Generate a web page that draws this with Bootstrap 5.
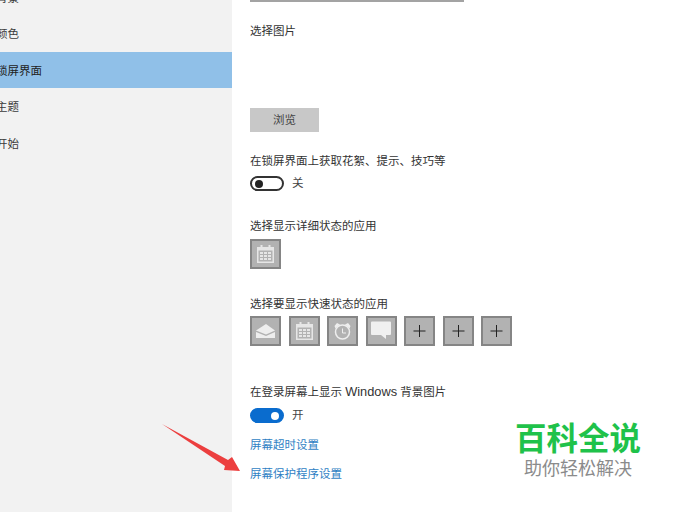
<!DOCTYPE html>
<html lang="zh-CN">
<head>
    <meta charset="UTF-8">
    <meta name="viewport" content="width=device-width, initial-scale=1.0">
    <title>锁屏界面</title>
    <link href="https://cdn.jsdelivr.net/npm/bootstrap@5.3.0/dist/css/bootstrap.min.css" rel="stylesheet">
    <style>
        html, body { height: 512px; overflow: hidden; }
        body { font-family: "Liberation Sans", "Noto Sans CJK SC", sans-serif; font-size: 11.5px; line-height: 18px; color: #333; background: #fff; position: relative; }
        .side-pane { width: 232px; height: 533px; background: #f2f2f2; margin-top: -21px; flex: none; }
        .side-item { height: 36.4px; line-height: 38px; color: #3a3a3a; text-indent: -4px; overflow: hidden; }
        .side-item.current { background: #90c0e8; color: #222; }
        .main-pane { padding-left: 18px; width: 460px; }
        .top-rule { width: 214px; height: 2px; background: #a3a3a3; }
        .set-label { height: 18px; white-space: nowrap; }
        .latin-word { font-size: 12.800px; }
        .browse-btn { width: 69px; height: 24px; background: #c8c8c8; border: 0; border-radius: 0; padding: 0; color: #444; font-size: 11.5px; line-height: 24px; }
        .switch-row { height: 15px; line-height: 15px; color: #444; }
        .switch-box { width: 34px; height: 15px; border: 2px solid #333; border-radius: 8px; position: relative; margin-right: 8px; }
        .switch-box::after { content: ""; position: absolute; top: 1.5px; left: 3px; width: 8px; height: 8px; border-radius: 50%; background: #222; }
        .switch-box.on { background: #0a6cce; border-color: #0a6cce; }
        .switch-box.on::after { left: auto; right: 3px; background: #fff; }
        .tile { width: 31px; height: 30px; background: #b2b2b2; border: 2px solid #858585; flex: none; }
        .tile svg { display: block; width: 27px; height: 26px; }
        .tile-row { gap: 7.5px; }
        .set-link { display: block; height: 18px; color: #2f7fc4; text-decoration: none; white-space: nowrap; }
        .arrow-mark { position: absolute; left: 158px; top: 420px; }
        .wm-box { position: absolute; left: 515px; top: 416px; width: 130px; }
        .wm-title { font-family: "Noto Sans CJK SC", sans-serif; font-size: 31.500px; line-height: 40px; font-weight: 700; color: #1fc24a; white-space: nowrap; }
        .wm-sub { font-family: "Noto Sans CJK SC", sans-serif; font-size: 18px; line-height: 22px; color: #8b8b8b; margin-left: 9px; white-space: nowrap; }
        .gap-a { margin-top: 20px; }
        .gap-b { margin-top: 68px; }
        .gap-c { margin-top: 20px; }
        .gap-d { margin-top: 6px; }
        .gap-e { margin-top: 26px; }
        .gap-f { margin-top: 26px; }
        .gap-g { margin-top: 37px; }
        .gap-h { margin-top: 4px; }
        .gap-h2 { margin-top: 3px; }
        .gap-i { margin-top: 13px; }
        .gap-j { margin-top: 11px; }
        .gap-k { margin-top: 7px; }
    </style>
</head>
<body>
    <div class="d-flex">
        <div class="side-pane">
            <div class="side-item">背景</div>
            <div class="side-item">颜色</div>
            <div class="side-item current">锁屏界面</div>
            <div class="side-item">主题</div>
            <div class="side-item">开始</div>
        </div>
        <div class="main-pane">
            <div class="top-rule"></div>
            <div class="set-label gap-a">选择图片</div>
            <button type="button" class="btn browse-btn d-block gap-b">浏览</button>
            <div class="set-label gap-c">在锁屏界面上获取花絮、提示、技巧等</div>
            <div class="d-flex align-items-center switch-row gap-d"><span class="switch-box"></span>关</div>
            <div class="set-label gap-e">选择显示详细状态的应用</div>
            <div class="d-flex tile-row gap-h">
                <div class="tile">
                    <svg viewBox="0 0 27 26"><path fill="#e6e6e6" d="M5 6h3.500V4h2v2h6V4h2v2H22v16H5z"/><path fill="#b2b2b2" d="M6.500 9.500h14v11h-14z"/><path fill="#e6e6e6" d="M8 11h3v2H8zM12 11h3v2h-3zM16 11h3v2h-3zM8 14h3v2H8zM12 14h3v2h-3zM16 14h3v2h-3zM8 17h3v2H8zM12 17h3v2h-3zM16 17h3v2h-3z"/></svg>
                </div>
            </div>
            <div class="set-label gap-f">选择要显示快速状态的应用</div>
            <div class="d-flex tile-row gap-h2">
                <div class="tile">
                    <svg viewBox="0 0 27 26"><path fill="#eee" d="M4 12.500L14 6l9 6.500V20H4z"/><path fill="#b2b2b2" d="M4 12.500l10 4 9-4v1.500l-9 4-10-4z"/></svg>
                </div>
                <div class="tile">
                    <svg viewBox="0 0 27 26"><path fill="#e6e6e6" d="M5 6h3.500V4h2v2h6V4h2v2H22v16H5z"/><path fill="#b2b2b2" d="M6.500 9.500h14v11h-14z"/><path fill="#e6e6e6" d="M8 11h3v2H8zM12 11h3v2h-3zM16 11h3v2h-3zM8 14h3v2H8zM12 14h3v2h-3zM16 14h3v2h-3zM8 17h3v2H8zM12 17h3v2h-3zM16 17h3v2h-3z"/></svg>
                </div>
                <div class="tile">
                    <svg viewBox="0 0 27 26"><circle cx="13.500" cy="14" r="7" fill="none" stroke="#eee" stroke-width="1.500"/><path fill="none" stroke="#eee" d="M13.500 10.500V15h3.500"/><path fill="#eee" d="M5.500 8L8 5l3 1.500L6.500 10.500zM21.500 8L19 5l-3 1.500 4.500 4z"/></svg>
                </div>
                <div class="tile">
                    <svg viewBox="0 0 27 26"><path fill="#f0f0f0" d="M4 3.500h18a1 1 0 0 1 1 1V16a1 1 0 0 1-1 1h-4v4l-5-4H4a1 1 0 0 1-1-1V4.500a1 1 0 0 1 1-1z"/></svg>
                </div>
                <div class="tile">
                    <svg viewBox="0 0 27 26"><path stroke="#222" d="M13.500 7v12M7.500 13h12"/></svg>
                </div>
                <div class="tile">
                    <svg viewBox="0 0 27 26"><path stroke="#222" d="M13.500 7v12M7.500 13h12"/></svg>
                </div>
                <div class="tile">
                    <svg viewBox="0 0 27 26"><path stroke="#222" d="M13.500 7v12M7.500 13h12"/></svg>
                </div>
            </div>
            <div class="set-label gap-g">在登录屏幕上显示 <span class="latin-word">Windows</span> 背景图片</div>
            <div class="d-flex align-items-center switch-row gap-k"><span class="switch-box on"></span>开</div>
            <a class="set-link gap-i" href="#">屏幕超时设置</a>
            <a class="set-link gap-j" href="#">屏幕保护程序设置</a>
        </div>
    </div>
    <svg class="arrow-mark" width="90" height="60" viewBox="0 0 90 60"><path fill="#ec3f3f" d="M4 4L70 40l4-3 8 14-16-1 1-4z"/></svg>
    <div class="wm-box">
        <div class="wm-title">百科全说</div>
        <div class="wm-sub">助你轻松解决</div>
    </div>
</body>
</html>
